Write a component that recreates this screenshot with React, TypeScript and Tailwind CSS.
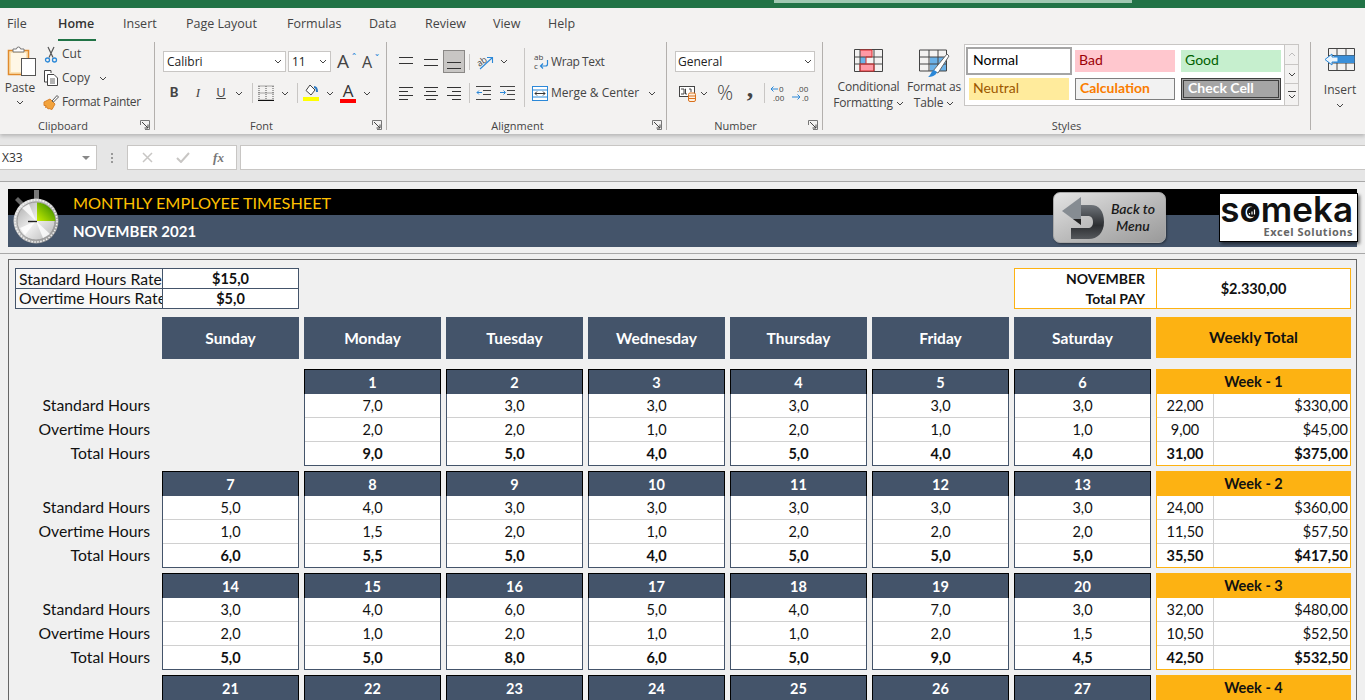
import type { ReactNode } from 'react';

const Chev = ({ className = '' }: { className?: string }) => (
  <svg width="8" height="5" viewBox="0 0 8 5" className={className}>
    <path d="M1 1l3 3 3-3" fill="none" stroke="#444" strokeWidth="1" />
  </svg>
);

const Launcher = () => (
  <svg width="10" height="10" viewBox="0 0 10 10" className="absolute right-[4px] top-[5px]">
    <path d="M.5 5V.5H9.5V9.5H5" fill="none" stroke="#777" />
    <path d="M2 2l6 6M8 4.500V8H4.500" fill="none" stroke="#444" />
  </svg>
);

const VSep = ({ className = '' }: { className?: string }) => <div className={`w-px bg-[#c8c6c4] ${className}`} />;

const Group = ({ label, className, labelClass, children }: { label: string; className: string; labelClass: string; children: ReactNode }) => (
  <div className={`flex flex-col shrink-0 h-[88px] border-r border-[#b3b0ad] ${className}`}>
    <div className="flex-1 min-h-0">{children}</div>
    <div className={`relative h-[15px] text-center text-[11px] leading-[22px] text-[#444] ${labelClass}`}>
      {label}
      {label !== 'Styles' && <Launcher />}
    </div>
  </div>
);

// each line: y, x, width
const Lines = ({ rows }: { rows: [number, number, number][] }) => (
  <svg width="16" height="14" viewBox="0 0 16 14">
    {rows.map(([y, x, w], i) => (
      <path key={i} d={`M${x} ${y + 0.5}h${w}`} stroke="#333" />
    ))}
  </svg>
);

const PasteIcon = () => (
  <svg width="30" height="32" viewBox="0 0 30 32">
    <rect x="1.500" y="4.500" width="20" height="24" fill="#fbe3b6" stroke="#e08a2c" strokeWidth="1.500" />
    <rect x="4" y="7" width="15" height="19" fill="#fff7e6" />
    <path d="M6 6V3h3.500a2 2 0 0 1 4 0H17v3z" fill="#fff" stroke="#777" />
    <rect x="14.500" y="12.500" width="14" height="17" fill="#fff" stroke="#555" />
  </svg>
);
const ScissorIcon = () => (
  <svg width="14" height="17" viewBox="0 0 14 17">
    <path d="M4 1l5 10.500M10 1L5 11.500" stroke="#555" strokeWidth="1.200" fill="none" />
    <circle cx="3.500" cy="14" r="2" fill="none" stroke="#2b88d8" strokeWidth="1.300" />
    <circle cx="10.500" cy="14" r="2" fill="none" stroke="#2b88d8" strokeWidth="1.300" />
  </svg>
);
const CopyIcon = () => (
  <svg width="16" height="16" viewBox="0 0 16 16">
    <path d="M8 3V.5H1.500V12H4.500" fill="#fff" stroke="#444" />
    <path d="M4.500 4.500H11l3.500 3.500v7.500h-10z" fill="#fff" stroke="#444" />
    <path d="M7 9h5M7 11h5M7 13h5" stroke="#666" />
  </svg>
);
const PainterIcon = () => (
  <svg width="17" height="16" viewBox="0 0 17 16">
    <path d="M1 8l6-3 5 5-3 5.500-3-1-1 .5-1-2-1.500.5.500-2-2 0z" fill="#f2a33c" stroke="#d9822b" />
    <path d="M9 7l5-5.500 1.500 1.500-5 5z" fill="#fff" stroke="#555" />
  </svg>
);
const BordersIcon = () => (
  <svg width="16" height="16" viewBox="0 0 16 16">
    <path d="M.5 1h15M.5 8h15M1 1v13M8 1v13M15 1v13" stroke="#555" strokeDasharray="1 1" fill="none" />
    <path d="M0 15.500h16" stroke="#111" strokeWidth="1.400" />
  </svg>
);
const FillIcon = () => (
  <svg width="16" height="18" viewBox="0 0 16 18">
    <path d="M7 1l5 5-4 5-5-4.500z" fill="#fff" stroke="#444" />
    <path d="M11 3c2 0 3 2 3 5" stroke="#2b79c2" strokeWidth="2" fill="none" />
    <rect x="0" y="13" width="16" height="4" fill="#ffff00" />
  </svg>
);
const FontColorIcon = () => (
  <div className="flex flex-col items-center w-[16px] h-[20px] text-[17px] leading-[15px] text-[#333]">
    A
    <div className="w-[16px] h-[4px] bg-[#ff0000] mt-[1px]" />
  </div>
);
const OrientIcon = () => (
  <svg width="17" height="16" viewBox="0 0 17 16" className="overflow-visible">
    <text x="0" y="10" fontSize="9" fill="#444" transform="rotate(-35 6 8)" fontFamily="'Open Sans',sans-serif">ab</text>
    <path d="M3 15L15 4M10 3.500h5.500V9" stroke="#2b88d8" fill="none" strokeWidth="1.100" />
  </svg>
);
const IndentIcon = ({ flip }: { flip?: boolean }) => (
  <svg width="15" height="14" viewBox="0 0 15 14">
    <path d="M0 .5h15M7 4.500h8M7 8.500h8M0 13.500h15" stroke="#444" fill="none" />
    <path d={flip ? 'M0 6.500h5M3.500 4.500l2 2-2 2' : 'M1 6.500h5M3 4.500l-2 2 2 2'} stroke="#2b88d8" fill="none" />
  </svg>
);
const WrapIcon = () => (
  <svg width="15" height="17" viewBox="0 0 15 17" className="overflow-visible">
    <text x="0" y="7" fontSize="8" fill="#444" fontFamily="'Open Sans',sans-serif">ab</text>
    <text x="0" y="16" fontSize="8" fill="#444" fontFamily="'Open Sans',sans-serif">c</text>
    <path d="M13.500 7v4a2 2 0 0 1-2 2H7M9 10.500L6.500 13 9 15.500" stroke="#2b88d8" fill="none" strokeWidth="1.200" />
  </svg>
);
const MergeIcon = () => (
  <svg width="16" height="15" viewBox="0 0 16 15">
    <rect x=".5" y=".5" width="15" height="14" fill="#fff" stroke="#2b88d8" />
    <path d="M.5 4h15M.5 11h15" stroke="#2b88d8" />
    <path d="M3 7.500h10M5 5.500l-2 2 2 2M11 5.500l2 2-2 2" stroke="#333" fill="none" />
  </svg>
);
const AccountingIcon = () => (
  <svg width="17" height="17" viewBox="0 0 17 17">
    <rect x=".5" y="1.500" width="15" height="10" fill="#fff" stroke="#444" />
    <path d="M2 4h3v5H2M7 4h-.5v5H8M10 4h2v3" stroke="#444" fill="none" />
    <rect x="9.500" y="8" width="7" height="8.500" rx="1.500" fill="#fdf0e0" stroke="#d9701c" />
    <path d="M9.500 11h7M9.500 13.500h7" stroke="#d9701c" />
  </svg>
);
const DecIcon = ({ more }: { more?: boolean }) => (
  <svg width="16" height="17" viewBox="0 0 16 17" fontFamily="'Open Sans',sans-serif" fontSize="8" fill="#444" className="overflow-visible">
    {more ? (
      <>
        <text x="5" y="7">.00</text>
        <text x="10" y="16">.0</text>
        <path d="M0 12h8M5.500 9.500L8 12l-2.500 2.500" stroke="#2b88d8" fill="none" />
      </>
    ) : (
      <>
        <text x="9" y="7">0</text>
        <text x="3" y="16">.00</text>
        <path d="M1 4h7M3.500 1.500L1 4l2.500 2.500" stroke="#2b88d8" fill="none" />
      </>
    )}
  </svg>
);
const CondIcon = () => (
  <svg width="29" height="23" viewBox="0 0 29 23">
    <rect x="6" y="1" width="12" height="7" fill="#ff99a5" />
    <rect x="6" y="8" width="6" height="7" fill="#6cb2e8" />
    <rect x="6" y="15" width="14" height="7" fill="#ff99a5" />
    <path d="M.5.500h28v22H.5zM.5 8h28M.5 15h28M6 .500v22M20 .500v22" stroke="#444" fill="none" />
    <path d="M6 1h12v7H12v7M6 15h14v7H6z" stroke="#d92c2c" fill="none" />
  </svg>
);
const TableIcon = () => (
  <svg width="31" height="29" viewBox="0 0 31 29">
    <rect x="11" y="8" width="17" height="14" fill="#6cb2e8" />
    <path d="M.5 1h27v21H.5zM.5 8h27M.5 15h27M10 1v21M19 1v21" stroke="#444" fill="none" />
    <path d="M14 22L28 5l2 2-11 17z" fill="#fff" stroke="#666" />
    <path d="M9 28c3 0 8-1 9-5l-3-2c-3 1-3 5-6 7z" fill="#2b88d8" />
  </svg>
);
const InsertIcon = () => (
  <svg width="30" height="23" viewBox="0 0 30 23">
    <path d="M3.500.500h26v22h-26zM12 .500v22M21 .500v22M3.500 7.500h26M3.500 15h26" stroke="#444" fill="none" />
    <rect x="9" y="7.500" width="20.500" height="7.500" fill="#3a8fd9" />
    <path d="M0 11.500L7 6v3h6v5H7v3z" fill="#eaf4fc" stroke="#2b88d8" />
  </svg>
);

const SmallCmd = ({ icon, children, extra }: { icon: ReactNode; children: ReactNode; extra?: ReactNode }) => (
  <div className="flex items-center h-[24px] text-[12px] text-[#444]">
    <div className="w-[20px] flex justify-center">{icon}</div>
    <span className="ml-[1px]">{children}</span>
    {extra}
  </div>
);

const Slot = ({ w, children, className = '' }: { w: string; children?: ReactNode; className?: string }) => (
  <div className={`flex items-center justify-center shrink-0 h-full ${w} ${className}`}>{children}</div>
);

const StyleCell = ({ className, children }: { className: string; children: string }) => (
  <div className={`flex items-center pl-[4px] pb-[3px] h-[22px] text-[14px] font-['Lato',sans-serif] ${className}`}>{children}</div>
);

const Ribbon = () => (
  <div className="relative z-10 bg-[#f3f2f1] shadow-[0_2px_4px_rgba(0,0,0,0.22)] font-['Open_Sans',sans-serif]">
    <div className="h-[8px] bg-[#217346] flex">
      <div className="ml-[774px] w-[358px] h-[3px] bg-[#a0c8b2]" />
    </div>
    <div className="flex h-[34px] text-[12.500px] text-[#444]">
      <div className="w-[58px] pl-[7px] pt-[7px]">File</div>
      <div className="w-[65px] pt-[7px]">
        <div className="w-[38px] h-[26px] border-b-[2px] border-[#217346] font-semibold text-[#333]">Home</div>
      </div>
      <div className="w-[63px] pt-[7px]">Insert</div>
      <div className="w-[101px] pt-[7px]">Page Layout</div>
      <div className="w-[82px] pt-[7px]">Formulas</div>
      <div className="w-[56px] pt-[7px]">Data</div>
      <div className="w-[68px] pt-[7px]">Review</div>
      <div className="w-[55px] pt-[7px]">View</div>
      <div className="pt-[7px]">Help</div>
    </div>
    <div className="flex h-[92px]">
      <Group label="Clipboard" className="w-[155px]" labelClass="pr-[28px]">
        <div className="flex pt-[3px]">
          <div className="w-[40px] flex flex-col items-center pt-[1px] text-[12px] text-[#444]">
            <div className="ml-[3px]"><PasteIcon /></div>
            <div className="mt-[2px] leading-[16px]">Paste</div>
            <Chev className="mt-[4px]" />
          </div>
          <div className="pl-[1px] -mt-[3px]">
            <SmallCmd icon={<ScissorIcon />}>Cut</SmallCmd>
            <SmallCmd icon={<CopyIcon />} extra={<Chev className="ml-[9px]" />}>Copy</SmallCmd>
            <SmallCmd icon={<PainterIcon />}><span className="tracking-[-0.35px]">Format Painter</span></SmallCmd>
          </div>
        </div>
      </Group>
      <Group label="Font" className="w-[232px]" labelClass="pr-[18px]">
        <div className="pl-[8px] pt-[9px]">
          <div className="flex h-[21px] text-[12px] text-[#222]">
            <div className="w-[123px] flex items-center justify-between px-[3px] bg-white border border-[#c8c6c4]">Calibri<Chev /></div>
            <div className="ml-[2px] w-[43px] flex items-center justify-between px-[3px] bg-white border border-[#c8c6c4]">11<Chev /></div>
            <div className="ml-[6px] w-[16px] text-[19px] leading-[21px] text-[#444] relative">A<span className="absolute -right-[3px] -top-[3px] text-[10px] text-[#2b88d8]">ˆ</span></div>
            <div className="ml-[9px] w-[15px] text-[16px] leading-[23px] text-[#444] relative">A<span className="absolute -right-[2px] -top-[3px] text-[10px] text-[#2b88d8]">ˇ</span></div>
          </div>
          <div className="flex items-center h-[20px] mt-[11px] -ml-[1px] text-[13px] text-[#444]">
            <Slot w="w-[24px]"><span className="font-['Lato',sans-serif] font-black">B</span></Slot>
            <Slot w="w-[24px]"><span className="font-['Liberation_Serif',serif] italic">I</span></Slot>
            <Slot w="w-[22px]"><span className="underline">U</span></Slot>
            <Slot w="w-[14px]"><Chev /></Slot>
            <Slot w="w-[6px]" />
            <VSep className="h-[20px]" />
            <Slot w="w-[25px]"><BordersIcon /></Slot>
            <Slot w="w-[14px]"><Chev /></Slot>
            <Slot w="w-[5px]" />
            <VSep className="h-[20px]" />
            <Slot w="w-[25px]"><FillIcon /></Slot>
            <Slot w="w-[13px]"><Chev /></Slot>
            <Slot w="w-[24px]"><FontColorIcon /></Slot>
            <Slot w="w-[13px]"><Chev /></Slot>
          </div>
        </div>
      </Group>
      <Group label="Alignment" className="w-[280px]" labelClass="pr-[18px]">
        <div className="flex pt-[6px]">
          <div className="w-[137px] shrink-0 pt-[2px]">
            <div className="flex h-[23px] items-center">
              <Slot w="w-[7px]" />
              <Slot w="w-[24px]"><Lines rows={[[2, 1, 14], [8, 1, 14]]} /></Slot>
              <Slot w="w-[25px]"><Lines rows={[[4, 1, 14], [10, 1, 14]]} /></Slot>
              <Slot w="w-[22px]" className="bg-[#c8c6c4] border border-[#8a8886]"><Lines rows={[[7, 1, 14], [13, 1, 14]]} /></Slot>
              <Slot w="w-[4px]" />
              <VSep className="h-[16px]" />
              <Slot w="w-[27px]" className="pl-[7px] justify-start"><OrientIcon /></Slot>
              <Slot w="w-[14px]"><Chev /></Slot>
            </div>
            <div className="flex h-[20px] mt-[10px] items-center">
              <Slot w="w-[7px]" />
              <Slot w="w-[24px]"><Lines rows={[[1, 1, 14], [5, 1, 9], [9, 1, 14], [13, 1, 9]]} /></Slot>
              <Slot w="w-[25px]"><Lines rows={[[1, 1, 14], [5, 3, 10], [9, 1, 14], [13, 3, 10]]} /></Slot>
              <Slot w="w-[22px]"><Lines rows={[[1, 1, 14], [5, 6, 9], [9, 1, 14], [13, 6, 9]]} /></Slot>
              <Slot w="w-[4px]" />
              <VSep className="h-[20px]" />
              <Slot w="w-[25px]" className="pl-[2px]"><IndentIcon /></Slot>
              <Slot w="w-[24px]"><IndentIcon flip /></Slot>
            </div>
          </div>
          <VSep className="h-[59px]" />
          <div className="pl-[8px] text-[12px] text-[#444]">
            <div className="flex items-center h-[23px] mt-[2px] pl-[1px]"><WrapIcon /><span className="ml-[2px] tracking-[-0.4px]">Wrap Text</span></div>
            <div className="flex items-center h-[20px] mt-[10px] -ml-[1px]"><MergeIcon /><span className="ml-[3px]">Merge &amp; Center</span><Chev className="ml-[9px]" /></div>
          </div>
        </div>
      </Group>
      <Group label="Number" className="w-[156px]" labelClass="pr-[18px]">
        <div className="pl-[8px] pt-[9px]">
          <div className="w-[140px] h-[21px] flex items-center justify-between px-[2px] bg-white border border-[#c8c6c4] text-[12px] text-[#222]">General<Chev /></div>
          <div className="flex items-center h-[20px] mt-[11px]">
            <Slot w="w-[22px]" className="pl-[3px]"><AccountingIcon /></Slot>
            <Slot w="w-[14px]"><Chev /></Slot>
            <Slot w="w-[28px]"><span className="text-[20px] text-[#444] font-light">%</span></Slot>
            <Slot w="w-[22px]"><span className="font-['Liberation_Serif',serif] font-bold text-[26px] leading-[20px] text-[#444] -mt-[8px]">,</span></Slot>
            <Slot w="w-[3px]" />
            <VSep className="h-[20px]" />
            <Slot w="w-[24px]" className="pl-[2px]"><DecIcon /></Slot>
            <Slot w="w-[22px]"><DecIcon more /></Slot>
          </div>
        </div>
      </Group>
      <Group label="Styles" className="w-[488px]" labelClass="">
        <div className="flex pt-[2px]">
          <div className="w-[91px] flex flex-col items-center pt-[5px] text-[12px] leading-[16px] text-[#444] tracking-[-0.2px]">
            <CondIcon />
            <div className="mt-[7px]">Conditional</div>
            <div className="flex items-center">Formatting<Chev className="ml-[3px]" /></div>
          </div>
          <div className="w-[40px] flex flex-col items-center pt-[5px] text-[12px] leading-[16px] text-[#444] whitespace-nowrap tracking-[-0.2px]">
            <div className="h-[23px] overflow-visible"><TableIcon /></div>
            <div className="mt-[7px]">Format as</div>
            <div className="flex items-center">Table<Chev className="ml-[3px]" /></div>
          </div>
          <div className="ml-[10px] w-[321px] h-[62px] bg-white border border-[#c8c6c4] grid grid-cols-[100px_100px_100px] content-start gap-x-[6px] gap-y-[6px] pl-[4px] pt-[5px]">
            <StyleCell className="bg-white text-[#000] outline-[2px] outline-[#a5a5a5] outline-offset-[1px] w-[100px]">Normal</StyleCell>
            <StyleCell className="bg-[#ffc7ce] text-[#9c0006]">Bad</StyleCell>
            <StyleCell className="bg-[#c6efce] text-[#006100]">Good</StyleCell>
            <StyleCell className="bg-[#ffeb9c] text-[#9c5700]">Neutral</StyleCell>
            <StyleCell className="bg-[#f2f2f2] text-[#fa7d00] font-bold border border-[#7f7f7f]">Calculation</StyleCell>
            <StyleCell className="bg-[#a5a5a5] text-white font-bold border-[3px] border-double border-[#3f3f3f]">Check Cell</StyleCell>
          </div>
          <div className="w-[14px] h-[62px] flex flex-col border border-l-0 border-[#c8c6c4] bg-[#f3f2f1]">
            <div className="h-[20px] flex items-center justify-center border-b border-[#c8c6c4]"><Chev className="rotate-180 opacity-30" /></div>
            <div className="h-[19px] flex items-center justify-center border-b border-[#c8c6c4]"><Chev /></div>
            <div className="flex-1 flex flex-col items-center justify-center"><div className="w-[8px] h-px bg-[#444] mb-[2px]" /><Chev /></div>
          </div>
        </div>
      </Group>
      <div className="flex-1 flex flex-col items-center pt-[6px] pl-[4px] text-[12px] text-[#444]">
        <InsertIcon />
        <div className="mt-[11px] leading-[16px]">Insert</div>
        <Chev className="mt-[5px]" />
      </div>
    </div>
  </div>
);

const FormulaBar = () => (
  <div className="h-[48px] bg-[#e6e6e6] border-b border-[#a8a8a8] font-['Open_Sans',sans-serif] pt-[11px]">
    <div className="flex h-[25px]">
      <div className="w-[97px] flex items-center justify-between pl-[2px] pr-[6px] bg-white border border-l-0 border-[#c8c6c4] text-[12px] text-[#333]">
        X33
        <div className="w-0 h-0 border-x-[4px] border-x-transparent border-t-[4px] border-t-[#888]" />
      </div>
      <div className="w-[30px] flex flex-col items-center justify-center gap-[2px]">
        <div className="w-[2px] h-[2px] bg-[#999]" /><div className="w-[2px] h-[2px] bg-[#999]" /><div className="w-[2px] h-[2px] bg-[#999]" />
      </div>
      <div className="w-[110px] flex items-center bg-white border border-[#c8c6c4]">
        <Slot w="w-[37px]" className="pl-[2px]">
          <svg width="11" height="11" viewBox="0 0 11 11"><path d="M1 1l9 9M10 1l-9 9" stroke="#c8c6c4" strokeWidth="1.500" /></svg>
        </Slot>
        <Slot w="w-[36px]">
          <svg width="14" height="11" viewBox="0 0 14 11"><path d="M1 6l4 4 8-9" stroke="#c8c6c4" strokeWidth="2" fill="none" /></svg>
        </Slot>
        <Slot w="w-[35px]"><span className="font-['Liberation_Serif',serif] italic font-bold text-[13px] text-[#777]">fx</span></Slot>
      </div>
      <div className="ml-[3px] flex-1 bg-white border border-r-0 border-[#c8c6c4]" />
    </div>
  </div>
);

const Stopwatch = () => (
  <svg width="48" height="56" viewBox="0 0 48 56" className="absolute left-[5px] top-[1px]">
    <defs>
      <linearGradient id="swRim" x1="0" y1="0" x2="1" y2="1">
        <stop offset="0" stopColor="#e8e8e8" />
        <stop offset="1" stopColor="#8d8d8d" />
      </linearGradient>
      <linearGradient id="swFace" x1="0" y1="0" x2="1" y2="1">
        <stop offset="0" stopColor="#a9a9a9" />
        <stop offset=".5" stopColor="#efefef" />
        <stop offset="1" stopColor="#b4b4b4" />
      </linearGradient>
      <linearGradient id="swGreen" x1="0" y1="1" x2="1" y2="0">
        <stop offset="0" stopColor="#c8ee00" />
        <stop offset=".6" stopColor="#66ac00" />
        <stop offset="1" stopColor="#1a5c00" />
      </linearGradient>
    </defs>
    <rect x="21" y="0" width="5" height="9" fill="#777" />
    <path d="M2 10l3-3 6 6-3 3z" fill="#666" />
    <circle cx="23" cy="31" r="22.500" fill="url(#swRim)" />
    <circle cx="23" cy="31" r="21" fill="none" stroke="#f2f2f2" strokeWidth="1.500" strokeDasharray="1.500 1.500" />
    <circle cx="23" cy="31" r="19" fill="url(#swFace)" stroke="#999" />
    <path d="M23 31L9 18 16 14zM23 31L7 38 12 45zM23 31L30 48 37 44z" fill="#ffffff" opacity=".8" />
    <path d="M24 31V12.500A19 19 0 0 1 42.500 31z" fill="url(#swGreen)" />
    <path d="M15 31.500h9" stroke="#222" strokeWidth="1.400" />
  </svg>
);

const BackButton = () => (
  <div className="absolute left-[1045px] top-[3px] w-[113px] h-[51px] rounded-[7px] flex items-center bg-gradient-to-br from-[#e4e4e4] via-[#bcbcbc] to-[#9a9a9a] border border-[#a8a8a8] shadow-[1px_1px_2px_rgba(0,0,0,0.4)]">
    <svg width="44" height="42" viewBox="0 0 44 42" className="ml-[7px] shrink-0">
      <defs>
        <linearGradient id="backShaft" x1="0" y1="0" x2="0" y2="1">
          <stop offset="0" stopColor="#6f747a" />
          <stop offset=".6" stopColor="#2c2e31" />
          <stop offset="1" stopColor="#55585c" />
        </linearGradient>
      </defs>
      <path d="M20 8H30C38 8 43 14 43 25C43 36 36 42 28 42H10V31H27C30 31 32 29 32 25C32 21 30 19 27 19H20z" fill="url(#backShaft)" />
      <path d="M1 14L20 0V28z" fill="#868c92" />
      <path d="M20 28L12 22h8z" fill="#222" />
    </svg>
    <div className="ml-[3px] w-[50px] text-center text-[14px] leading-[17px] italic font-semibold text-[#1a1a1a] -mt-[2px]">Back to Menu</div>
  </div>
);

const Logo = () => (
  <div className="absolute left-[1211px] top-[4px] w-[139px] h-[49px] bg-white border border-black shadow-[2px_2px_3px_rgba(0,0,0,0.5)] flex flex-col items-end pr-[4px]">
    <div className="relative w-full text-right font-['Inter',sans-serif] font-semibold text-[35px] leading-[33px] text-[#111] -mt-[1px]">
      someka
      <svg width="14" height="14" viewBox="0 0 14 14" className="absolute left-[25px] top-[12px]">
        <circle cx="7" cy="7" r="5" fill="#111" />
        <path d="M4.500 9.500V8M7 9.500V6.500M9.500 9.500V4.500" stroke="#fff" strokeWidth="1.200" />
      </svg>
    </div>
    <div className="text-[11px] leading-[12px] font-bold tracking-[0.5px] text-[#666] font-['Open_Sans',sans-serif]">Excel Solutions</div>
  </div>
);

const Banner = () => (
  <div className="relative mx-[8px] mt-[7px] h-[58px] font-['Lato',sans-serif]">
    <div className="h-[26px] bg-black pl-[65px] text-[16.250px] leading-[28px] text-[#ffc000]">MONTHLY EMPLOYEE TIMESHEET</div>
    <div className="h-[32px] bg-[#44546a] pl-[65px] text-[15px] leading-[32px] font-bold text-white">NOVEMBER 2021</div>
    <Stopwatch />
    <BackButton />
    <Logo />
  </div>
);

type Week = { title: string; start: number; std: string[]; ot: string[]; tot: string[]; sum: string[][] };

const weeks: Week[] = [
  {
    title: 'Week - 1', start: 1,
    std: ['', '7,0', '3,0', '3,0', '3,0', '3,0', '3,0'],
    ot: ['', '2,0', '2,0', '1,0', '2,0', '1,0', '1,0'],
    tot: ['', '9,0', '5,0', '4,0', '5,0', '4,0', '4,0'],
    sum: [['22,00', '$330,00'], ['9,00', '$45,00'], ['31,00', '$375,00']],
  },
  {
    title: 'Week - 2', start: 7,
    std: ['5,0', '4,0', '3,0', '3,0', '3,0', '3,0', '3,0'],
    ot: ['1,0', '1,5', '2,0', '1,0', '2,0', '2,0', '2,0'],
    tot: ['6,0', '5,5', '5,0', '4,0', '5,0', '5,0', '5,0'],
    sum: [['24,00', '$360,00'], ['11,50', '$57,50'], ['35,50', '$417,50']],
  },
  {
    title: 'Week - 3', start: 14,
    std: ['3,0', '4,0', '6,0', '5,0', '4,0', '7,0', '3,0'],
    ot: ['2,0', '1,0', '2,0', '1,0', '1,0', '2,0', '1,5'],
    tot: ['5,0', '5,0', '8,0', '6,0', '5,0', '9,0', '4,5'],
    sum: [['32,00', '$480,00'], ['10,50', '$52,50'], ['42,50', '$532,50']],
  },
  {
    title: 'Week - 4', start: 21,
    std: ['', '', '', '', '', '', ''],
    ot: ['', '', '', '', '', '', ''],
    tot: ['', '', '', '', '', '', ''],
    sum: [['', ''], ['', ''], ['', '']],
  },
];

const dayNames = ['Sunday', 'Monday', 'Tuesday', 'Wednesday', 'Thursday', 'Friday', 'Saturday'];

const DayCell = ({ day, std, ot, tot }: { day: number; std: string; ot: string; tot: string }) => (
  <div className="h-[97px] text-[14.500px] text-[#111]">
    <div className="h-[25px] bg-[#44546a] border border-black border-b-0 text-center text-white font-bold leading-[25px]">{day}</div>
    <div className="bg-white border border-t-0 border-[#44546a] text-center">
      <div className="h-[24px] leading-[24px] border-b border-[#d0d0d0]">{std}</div>
      <div className="h-[24px] leading-[24px] border-b border-[#d0d0d0]">{ot}</div>
      <div className="h-[23px] leading-[23px] font-bold">{tot}</div>
    </div>
  </div>
);

const WeekRow = ({ week }: { week: Week }) => {
  let n = week.start;
  return (
    <div className="grid grid-cols-[142px_repeat(7,137px)_195px] gap-x-[5px] mb-[5px]">
      <div className="pt-[24px] pr-[7px] text-right text-[15.750px] text-[#111] leading-[24px]">
        {week.title !== 'Week - 4' && (
          <>
            <div>Standard Hours</div>
            <div>Overtime Hours</div>
            <div>Total Hours</div>
          </>
        )}
      </div>
      {week.std.map((s, i) =>
        week.start === 1 && i === 0 ? (
          <div key={i} />
        ) : (
          <DayCell key={i} day={n++} std={s} ot={week.ot[i]} tot={week.tot[i]} />
        ),
      )}
      <div className="h-[97px] text-[14.500px] text-[#111]">
        <div className="h-[25px] bg-[#fdb212] text-center font-bold leading-[26px]">{week.title}</div>
        <div className="bg-white border border-t-0 border-[#fdb212]">
          {week.sum.map((r, i) => (
            <div key={i} className={`flex leading-[24px] ${i < 2 ? 'h-[24px] border-b border-[#d0d0d0]' : 'h-[23px] font-bold'}`}>
              <div className="w-[57px] text-center border-r border-[#d0d0d0]">{r[0]}</div>
              <div className="flex-1 text-right pr-[2px]">{r[1]}</div>
            </div>
          ))}
        </div>
      </div>
    </div>
  );
};

const Sheet = () => (
  <div className="mx-[8px] mt-[5px] border border-[#666] h-[446px] overflow-hidden pl-[6px] pr-[5px] pt-[8px] font-['Lato',sans-serif] text-[#111]">
    <div className="flex justify-between h-[41px] text-[14.500px]">
      <div className="w-[284px] border border-[#44546a] bg-[#f8f8f8] text-[15.750px]">
        <div className="flex h-[20px] border-b border-[#44546a]">
          <div className="w-[147px] pl-[3px] leading-[19px] overflow-hidden whitespace-nowrap border-r border-[#44546a]">Standard Hours Rate</div>
          <div className="flex-1 bg-white text-center text-[14.500px] font-bold leading-[19px]">$15,0</div>
        </div>
        <div className="flex h-[19px]">
          <div className="w-[147px] pl-[3px] leading-[18px] overflow-hidden whitespace-nowrap border-r border-[#44546a]">Overtime Hours Rate</div>
          <div className="flex-1 bg-white text-center text-[14.500px] font-bold leading-[19px]">$5,0</div>
        </div>
      </div>
      <div className="w-[337px] flex border border-[#fdb212] bg-white font-bold">
        <div className="w-[142px] text-right pr-[11px] leading-[19.500px] text-[14px] border-r border-[#fdb212]">NOVEMBER<br />Total PAY</div>
        <div className="flex-1 flex items-center justify-center">$2.330,00</div>
      </div>
    </div>
    <div className="grid grid-cols-[142px_repeat(7,137px)_195px] gap-x-[5px] mt-[8px] mb-[10px] h-[42px] text-[15.500px] font-bold">
      <div />
      {dayNames.map((d) => (
        <div key={d} className="bg-[#44546a] text-white text-center leading-[42px]">{d}</div>
      ))}
      <div className="bg-[#fdb212] h-[41px] text-center leading-[41px] text-[#111]">Weekly Total</div>
    </div>
    {weeks.map((w) => (
      <WeekRow key={w.title} week={w} />
    ))}
  </div>
);

export default function App() {
  return (
    <div className="h-[700px] overflow-hidden bg-[#f0f0f0]">
      <Ribbon />
      <FormulaBar />
      <Banner />
      <div className="mt-[6px] h-px bg-[#a8a8a8]" />
      <Sheet />
    </div>
  );
}
